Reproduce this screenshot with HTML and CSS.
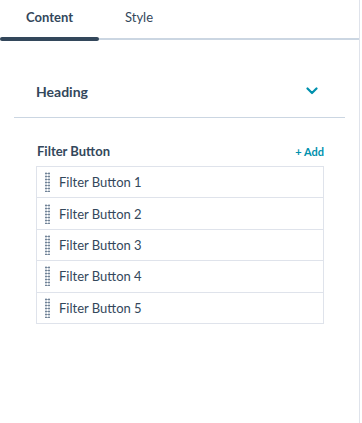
FILE: index.html
```html
<!DOCTYPE html>
<html lang="en">
<head>
    <meta charset="UTF-8">
    <title>Module Editor</title>
    <link rel="stylesheet" href="styles.css">
</head>
<body>
    <div class="panel">
        <div class="tabs">
            <div class="tab active">Content</div>
            <div class="tab">Style</div>
        </div>

        <div class="section">
            <div class="group-header">
                <span class="group-title">Heading</span>
                <svg class="chevron" width="12" height="8" viewBox="0 0 12 8">
                    <path d="M1.5 1.5 L6 6 L10.5 1.5" fill="none" stroke="#0091ae" stroke-width="2.2" stroke-linecap="round" stroke-linejoin="round"/>
                </svg>
            </div>
        </div>

        <div class="field">
            <div class="field-header">
                <span class="field-label">Filter Button</span>
                <a href="#" class="add-link">+ Add</a>
            </div>
            <ul class="repeater" id="repeater"></ul>
        </div>
    </div>

    <script>
        const items = ['Filter Button 1', 'Filter Button 2', 'Filter Button 3', 'Filter Button 4', 'Filter Button 5'];
        const list = document.getElementById('repeater');
        items.forEach(label => {
            const li = document.createElement('li');
            li.className = 'repeater-item';
            li.innerHTML = `<span class="drag-handle"></span><span class="item-label">${label}</span>`;
            list.appendChild(li);
        });
    </script>
</body>
</html>
```

FILE: styles.css
```css
body {
    margin: 0;
    font-family: 'Lato', 'Liberation Sans', sans-serif;
    color: #33475b;
    background: #fff;
}
.panel {
    width: 359px;
    height: 423px;
    border-right: 1px solid #dfe3eb;
    box-sizing: content-box;
}
.tabs {
    display: flex;
    height: 38px;
    border-bottom: 2px solid #cbd6e2;
}
.tab {
    position: relative;
    font-size: 13px;
    line-height: 16px;
    padding: 9px 26px 0 26px;
    color: #33475b;
}
.tab.active {
    font-weight: 700;
    width: 47px;
    text-align: center;
}
.tab.active::after {
    content: '';
    position: absolute;
    left: 0;
    right: 0;
    bottom: -3px;
    height: 4px;
    border-radius: 2px;
    background: #33475b;
}
.section {
    margin: 0 14px;
    border-bottom: 1px solid #cbd6e2;
}
.group-header {
    display: flex;
    align-items: center;
    justify-content: space-between;
    box-sizing: border-box;
    height: 77px;
    padding: 25px 27px 0 22px;
}
.group-title {
    font-size: 14px;
    font-weight: 700;
}
.chevron {
    display: block;
}
.field {
    padding: 26px 36px 0 36px;
    width: 288px;
}
.field-header {
    display: flex;
    justify-content: space-between;
    align-items: center;
    height: 14px;
    margin-bottom: 8px;
    padding-left: 1px;
}
.field-label {
    font-size: 13px;
    font-weight: 700;
}
.add-link {
    color: #0091ae;
    font-size: 11px;
    font-weight: 700;
    text-decoration: none;
}
.repeater {
    list-style: none;
    margin: 0;
    padding: 0;
    border: 1px solid #dfe3eb;
}
.repeater-item {
    display: flex;
    align-items: center;
    height: 30.4px;
    border-top: 1px solid #dfe3eb;
}
.repeater-item:first-child {
    border-top: none;
}
.drag-handle {
    width: 5px;
    height: 20px;
    margin: 0 9px 0 8px;
    background-image: radial-gradient(circle, #425b76 0.9px, transparent 1.1px);
    background-size: 3px 3px;
    background-position: -0.5px 0;
}
.item-label {
    font-size: 13px;
    color: #33475b;
}
```
